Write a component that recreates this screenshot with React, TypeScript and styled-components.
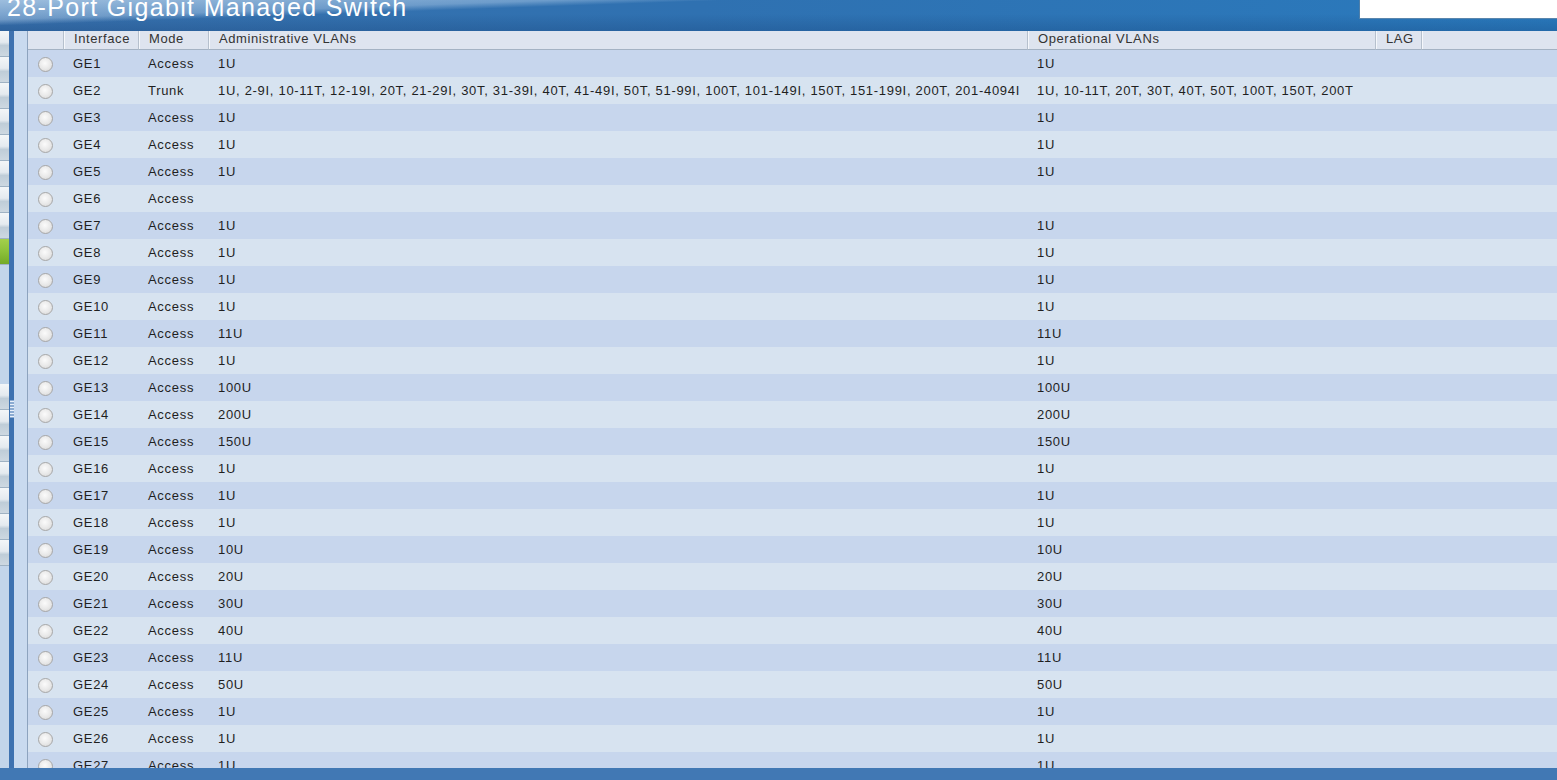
import React from "react";
import styled, { createGlobalStyle } from "styled-components";

const GlobalStyle = createGlobalStyle`
  html, body {
    margin: 0;
    padding: 0;
    height: 100%;
    overflow: hidden;
  }
  body {
    font-family: "Liberation Sans", Arial, sans-serif;
    background: #c8d9ef;
  }
  #root {
    height: 100%;
  }
  * {
    box-sizing: border-box;
  }
`;

const Page = styled.div`
  display: flex;
  flex-direction: column;
  height: 100vh;
`;

const TopBar = styled.header`
  flex: 0 0 31px;
  display: flex;
  align-items: flex-start;
  overflow: hidden;
  background:
    linear-gradient(178deg, rgba(205, 226, 245, 0.68) 0%, rgba(190, 215, 240, 0.42) 23%, rgba(255, 255, 255, 0) 30%),
    linear-gradient(to bottom, rgba(0, 0, 0, 0) 45%, rgba(8, 40, 90, 0.2) 100%),
    linear-gradient(to right, #3871ad 0%, #2f71b1 45%, #2a7abd 100%);
`;

const Title = styled.h1`
  margin: -7px 0 0 7px;
  font-size: 25px;
  line-height: 28px;
  letter-spacing: 1.35px;
  font-weight: normal;
  color: #fff;
  white-space: nowrap;
`;

const SearchBox = styled.div`
  margin-left: auto;
  width: 198px;
  height: 19px;
  background: #fff;
  border-left: 1px solid #4f7fa9;
  border-bottom: 1px solid #5a86ad;
`;

const Body = styled.div`
  flex: 1;
  min-height: 0;
  display: flex;
`;

const SideMenu = styled.nav`
  flex: 0 0 9px;
  display: flex;
  flex-direction: column;
  background: #c2d5ea;
  overflow: hidden;
`;

const MenuGroup = styled.div<{ $gap?: number }>`
  display: flex;
  flex-direction: column;
  margin-top: ${(p) => p.$gap ?? 0}px;
`;

const MenuItem = styled.div<{ $active?: boolean }>`
  height: 26px;
  border-bottom: 1px solid #9fb2c3;
  background: ${(p) =>
    p.$active
      ? "linear-gradient(to bottom, #a3d04c 0%, #8cc13a 50%, #74aa27 100%)"
      : "linear-gradient(to bottom, #f3f6f8 0%, #e4eaef 45%, #bfcdd8 58%, #cdd8e1 100%)"};
`;

const Splitter = styled.div`
  flex: 0 0 5px;
  background: #3e72b0;
  display: flex;
  flex-direction: column;
  justify-content: center;
  align-items: center;
`;

const Grip = styled.div`
  width: 4px;
  height: 18px;
  margin-top: 18px;
  background-image: radial-gradient(circle, #e8f0fa 0.9px, rgba(255, 255, 255, 0) 1.3px);
  background-size: 2px 3px;
`;

const Gutter = styled.div`
  flex: 0 0 14px;
  background: #c9daef;
  border-right: 1px solid #8da3be;
`;

const Content = styled.main`
  flex: 1;
  min-width: 0;
  overflow: hidden;
  background: #d7e3f0;
`;

const Table = styled.table`
  width: 100%;
  table-layout: fixed;
  border-collapse: separate;
  border-spacing: 0;
`;

const Col = styled.col<{ $w?: number }>`
  width: ${(p) => (p.$w ? `${p.$w}px` : "auto")};
`;

const Th = styled.th<{ $sep?: boolean }>`
  height: 19px;
  padding: 0 0 0 10px;
  text-align: left;
  vertical-align: top;
  font-weight: normal;
  font-size: 13px;
  line-height: 15px;
  letter-spacing: 0.6px;
  color: #333;
  white-space: nowrap;
  background: #dee4ef;
  border-bottom: 1px solid #a4b2c3;
  border-left: ${(p) => (p.$sep ? "1px solid #b6c0cd" : "none")};
  box-shadow: ${(p) => (p.$sep ? "inset 1px 0 #f5f7fb" : "none")};
`;

const Row = styled.tr<{ $odd?: boolean }>`
  background: ${(p) => (p.$odd ? "#c7d6ed" : "#d7e3f0")};
`;

const Td = styled.td`
  height: 27px;
  padding: 0 0 0 10px;
  font-size: 13px;
  letter-spacing: 0.7px;
  color: #1f1f1f;
  white-space: nowrap;
  overflow: hidden;
  vertical-align: middle;
`;

const RadioCell = styled.td`
  height: 27px;
  padding: 0;
  text-align: center;
  vertical-align: middle;
`;

const Radio = styled.span`
  display: inline-block;
  width: 15px;
  height: 15px;
  border-radius: 50%;
  border: 1px solid #a7a7a7;
  background: radial-gradient(circle at 45% 40%, #fbfbfb 0%, #e8e8e8 55%, #d2d2d2 100%);
  vertical-align: middle;
`;

const Footer = styled.footer`
  flex: 0 0 12px;
  background: #4178b4;
`;

type Port = { name: string; mode: string; admin: string; oper: string };

const trunkAdmin =
  "1U, 2-9I, 10-11T, 12-19I, 20T, 21-29I, 30T, 31-39I, 40T, 41-49I, 50T, 51-99I, 100T, 101-149I, 150T, 151-199I, 200T, 201-4094I";
const trunkOper = "1U, 10-11T, 20T, 30T, 40T, 50T, 100T, 150T, 200T";

const accessVlans = [
  "1U", "", "1U", "1U", "1U", "", "1U", "1U", "1U", "1U", "11U", "1U", "100U", "200U",
  "150U", "1U", "1U", "1U", "10U", "20U", "30U", "40U", "11U", "50U", "1U", "1U", "1U",
];

const ports: Port[] = accessVlans.map((v, i) =>
  i === 1
    ? { name: "GE2", mode: "Trunk", admin: trunkAdmin, oper: trunkOper }
    : { name: `GE${i + 1}`, mode: "Access", admin: v, oper: v }
);

const App = () => (
  <Page>
    <GlobalStyle />
    <TopBar>
      <Title>28-Port Gigabit Managed Switch</Title>
      <SearchBox />
    </TopBar>
    <Body>
      <SideMenu>
        <MenuGroup>
          {Array.from({ length: 8 }).map((_, i) => (
            <MenuItem key={i} />
          ))}
          <MenuItem $active />
        </MenuGroup>
        <MenuGroup $gap={119}>
          {Array.from({ length: 7 }).map((_, i) => (
            <MenuItem key={i} />
          ))}
        </MenuGroup>
      </SideMenu>
      <Splitter>
        <Grip />
      </Splitter>
      <Gutter />
      <Content>
        <Table>
          <colgroup>
            <Col $w={35} />
            <Col $w={75} />
            <Col $w={70} />
            <Col $w={819} />
            <Col $w={348} />
            <Col $w={46} />
            <Col />
          </colgroup>
          <thead>
            <tr>
              <Th />
              <Th $sep>Interface</Th>
              <Th $sep>Mode</Th>
              <Th $sep>Administrative VLANs</Th>
              <Th $sep>Operational VLANs</Th>
              <Th $sep>LAG</Th>
              <Th $sep />
            </tr>
          </thead>
          <tbody>
            {ports.map((p, i) => (
              <Row key={p.name} $odd={i % 2 === 0}>
                <RadioCell>
                  <Radio />
                </RadioCell>
                <Td>{p.name}</Td>
                <Td>{p.mode}</Td>
                <Td>{p.admin}</Td>
                <Td>{p.oper}</Td>
                <Td />
                <Td />
              </Row>
            ))}
          </tbody>
        </Table>
      </Content>
    </Body>
    <Footer />
  </Page>
);

export default App;
